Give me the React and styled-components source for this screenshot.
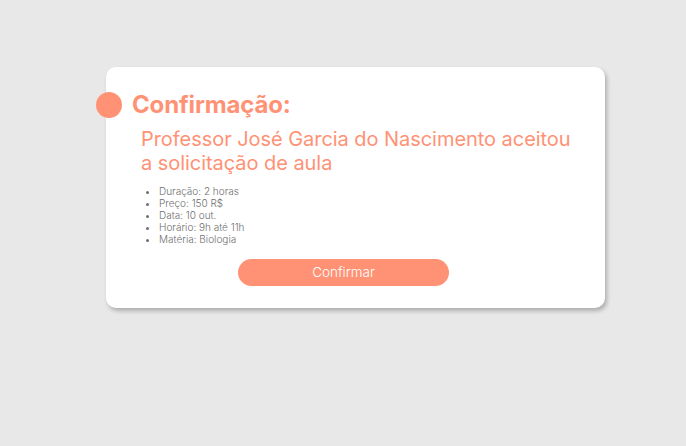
import React from "react";
import styled, { createGlobalStyle } from "styled-components";

const GlobalStyle = createGlobalStyle`
  * { box-sizing: border-box; }
  html, body {
    margin: 0;
    padding: 0;
    background: #e8e8e8;
    font-family: Inter, "Noto Sans", sans-serif;
  }
`;

const Page = styled.main`
  width: 686px;
  height: 446px;
  padding: 67px 0 0 106px;
`;

const Card = styled.section`
  width: 499px;
  height: 241px;
  background: #fff;
  border-radius: 10px;
  box-shadow: 2px 3px 4px rgba(0, 0, 0, 0.25);
  padding: 23px 0 0 26px;
  display: flex;
  flex-direction: column;
`;

const Header = styled.header`
  display: flex;
  align-items: center;
  gap: 10px;
  margin-left: -36px;
`;

const Dot = styled.span`
  width: 26px;
  height: 26px;
  border-radius: 50%;
  background: #ff9275;
  flex: none;
`;

const Title = styled.h1`
  margin: 0;
  font-size: 24px;
  font-weight: 700;
  line-height: 29px;
  letter-spacing: -0.15px;
  color: #ff9275;
`;

const Message = styled.p`
  margin: 8px 0 0 9px;
  font-size: 20px;
  font-weight: 400;
  line-height: 24px;
  letter-spacing: -0.05px;
  color: #ff9275;
`;

const Details = styled.ul`
  margin: 10px 0 0 9px;
  padding-left: 18px;
  font-size: 10px;
  font-weight: 300;
  line-height: 12px;
  color: #6f6f6f;
`;

const Button = styled.button`
  margin: 14px 0 0 106px;
  width: 211px;
  height: 27px;
  padding: 0;
  border: none;
  border-radius: 14px;
  background: #ff9275;
  color: #fff;
  font-family: inherit;
  font-size: 13.5px;
  font-weight: 300;
  line-height: 27px;
  cursor: pointer;
`;

const items = [
  "Duração: 2 horas",
  "Preço: 150 R$",
  "Data: 10 out.",
  "Horário: 9h até 11h",
  "Matéria: Biologia",
];

export default function App() {
  return (
    <>
      <GlobalStyle />
      <Page>
        <Card>
          <Header>
            <Dot />
            <Title>Confirmação:</Title>
          </Header>
          <Message>
            Professor José Garcia do Nascimento aceitou
            <br />a solicitação de aula
          </Message>
          <Details>
            {items.map((item) => (
              <li key={item}>{item}</li>
            ))}
          </Details>
          <Button>Confirmar</Button>
        </Card>
      </Page>
    </>
  );
}
